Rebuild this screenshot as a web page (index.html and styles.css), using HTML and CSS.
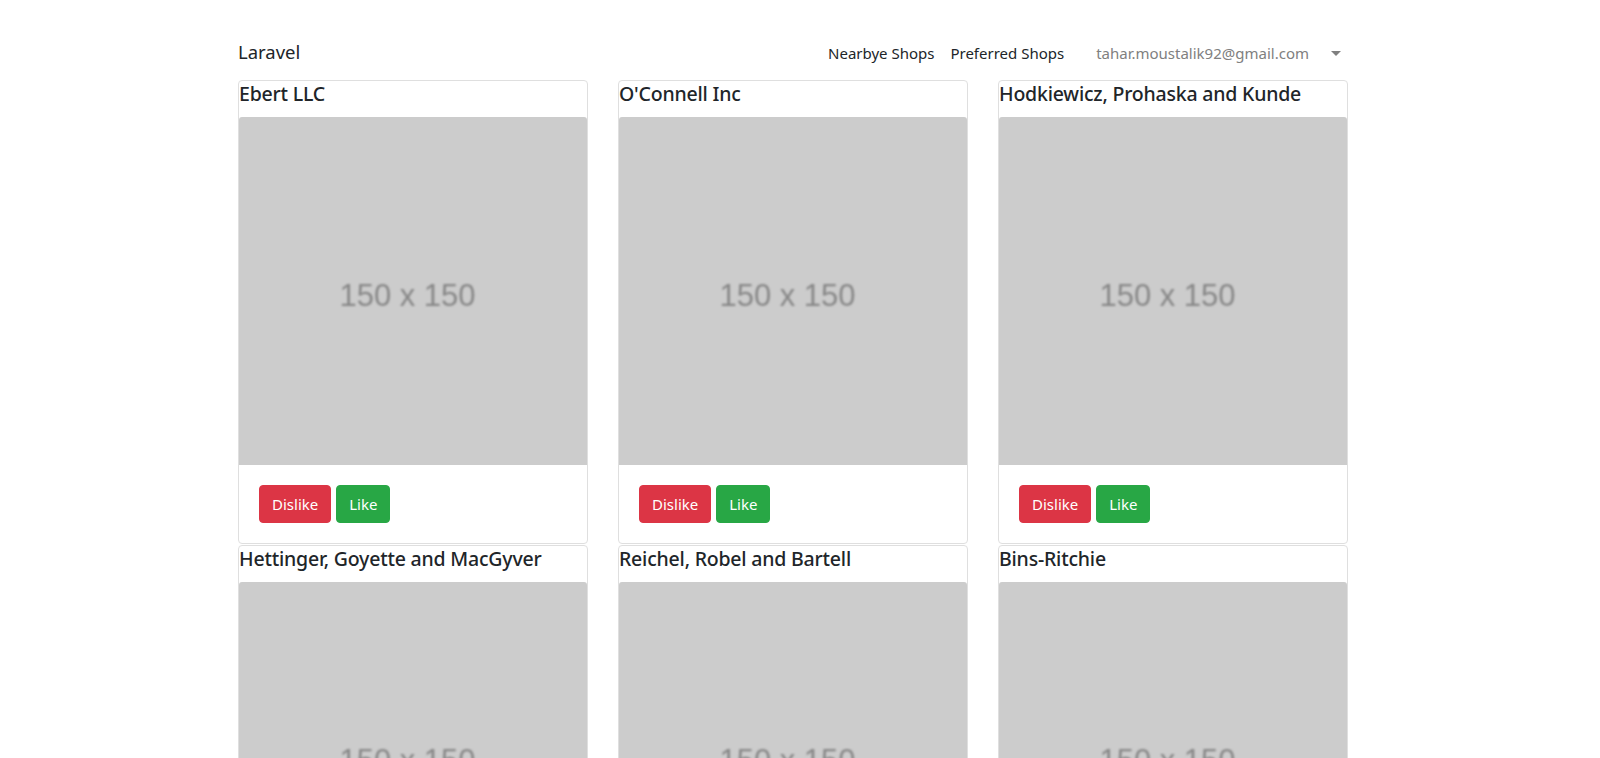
FILE: index.html
```html
<!DOCTYPE html>
<html lang="en">
<head>
<meta charset="utf-8">
<title>Laravel</title>
<link rel="stylesheet" href="styles.css">
</head>
<body>
<div class="app">
  <nav class="navbar">
    <a class="brand" href="#">Laravel</a>
    <ul class="nav-links">
      <li><a class="nav-link" href="#">Nearbye Shops</a></li>
      <li><a class="nav-link" href="#">Preferred Shops</a></li>
    </ul>
    <div class="user-menu">
      <a class="nav-link user" href="#">tahar.moustalik92@gmail.com</a>
      <span class="caret"></span>
    </div>
  </nav>
  <main class="shops">
    <div class="card">
      <h5 class="card-title">Ebert LLC</h5>
      <div class="placeholder"><span>150 x 150</span></div>
      <div class="card-body"><button class="btn btn-danger">Dislike</button><button class="btn btn-success">Like</button></div>
    </div>
    <div class="card">
      <h5 class="card-title">O'Connell Inc</h5>
      <div class="placeholder"><span>150 x 150</span></div>
      <div class="card-body"><button class="btn btn-danger">Dislike</button><button class="btn btn-success">Like</button></div>
    </div>
    <div class="card">
      <h5 class="card-title">Hodkiewicz, Prohaska and Kunde</h5>
      <div class="placeholder"><span>150 x 150</span></div>
      <div class="card-body"><button class="btn btn-danger">Dislike</button><button class="btn btn-success">Like</button></div>
    </div>
    <div class="card">
      <h5 class="card-title">Hettinger, Goyette and MacGyver</h5>
      <div class="placeholder"><span>150 x 150</span></div>
      <div class="card-body"><button class="btn btn-danger">Dislike</button><button class="btn btn-success">Like</button></div>
    </div>
    <div class="card">
      <h5 class="card-title">Reichel, Robel and Bartell</h5>
      <div class="placeholder"><span>150 x 150</span></div>
      <div class="card-body"><button class="btn btn-danger">Dislike</button><button class="btn btn-success">Like</button></div>
    </div>
    <div class="card">
      <h5 class="card-title">Bins-Ritchie</h5>
      <div class="placeholder"><span>150 x 150</span></div>
      <div class="card-body"><button class="btn btn-danger">Dislike</button><button class="btn btn-success">Like</button></div>
    </div>
  </main>
</div>
</body>
</html>
```
FILE: styles.css
```css
* { box-sizing: border-box; }
html, body {
  margin: 0;
  padding: 0;
  background: #fff;
}
body {
  font-family: "Noto Sans", "Open Sans", sans-serif;
  font-size: 16px;
  color: #212529;
}
.app {
  width: 1110px;
  margin-left: calc(50% - 562px);
}
.navbar {
  display: flex;
  align-items: baseline;
  padding-top: 37px;
  height: 80px;
}
.brand {
  font-size: 18.5px;
  line-height: 30px;
  color: #212529;
  text-decoration: none;
}
.nav-links {
  list-style: none;
  display: flex;
  margin: 0 0 0 auto;
  padding: 0;
  gap: 16px;
}
.nav-link {
  color: #212529;
  text-decoration: none;
  font-size: 15px;
  line-height: 24px;
}
.user-menu {
  display: flex;
  align-items: baseline;
  margin-left: 32px;
  margin-right: 7px;
}
.nav-link.user { color: #808080; }
.caret {
  display: inline-block;
  margin-left: 22px;
  width: 0;
  height: 0;
  border-top: 5px solid #808080;
  border-left: 5px solid transparent;
  border-right: 5px solid transparent;
  align-self: center;
}
.shops {
  display: grid;
  grid-template-columns: repeat(3, 350px);
  column-gap: 30px;
  row-gap: 1px;
}
.card {
  border: 1px solid #dfdfdf;
  border-radius: 4px;
  display: flex;
  flex-direction: column;
}
.card-title {
  margin: 0 0 11px;
  padding-top: 1px;
  font-size: 19.5px;
  line-height: 24px;
  font-weight: 500;
  letter-spacing: -0.2px;
  color: #212529;
}
.placeholder {
  height: 348px;
  background: #cccccc;
  border-radius: 3px 3px 0 0;
  display: flex;
  align-items: center;
  justify-content: center;
  padding: 8px 11px 0 0;
}
.placeholder span {
  font-family: "Liberation Sans", Arial, sans-serif;
  font-size: 31px;
  line-height: 1;
  color: #878787;
  filter: blur(0.9px);
}
.card-body {
  padding: 20px;
  display: flex;
  gap: 5px;
}
.btn {
  font-family: inherit;
  font-size: 15px;
  line-height: 24px;
  padding: 6px 12px;
  border: 1px solid transparent;
  border-radius: 4px;
  color: #fff;
  cursor: pointer;
}
.btn-danger { background: #dc3545; border-color: #dc3545; }
.btn-success { background: #28a745; border-color: #28a745; }
```
